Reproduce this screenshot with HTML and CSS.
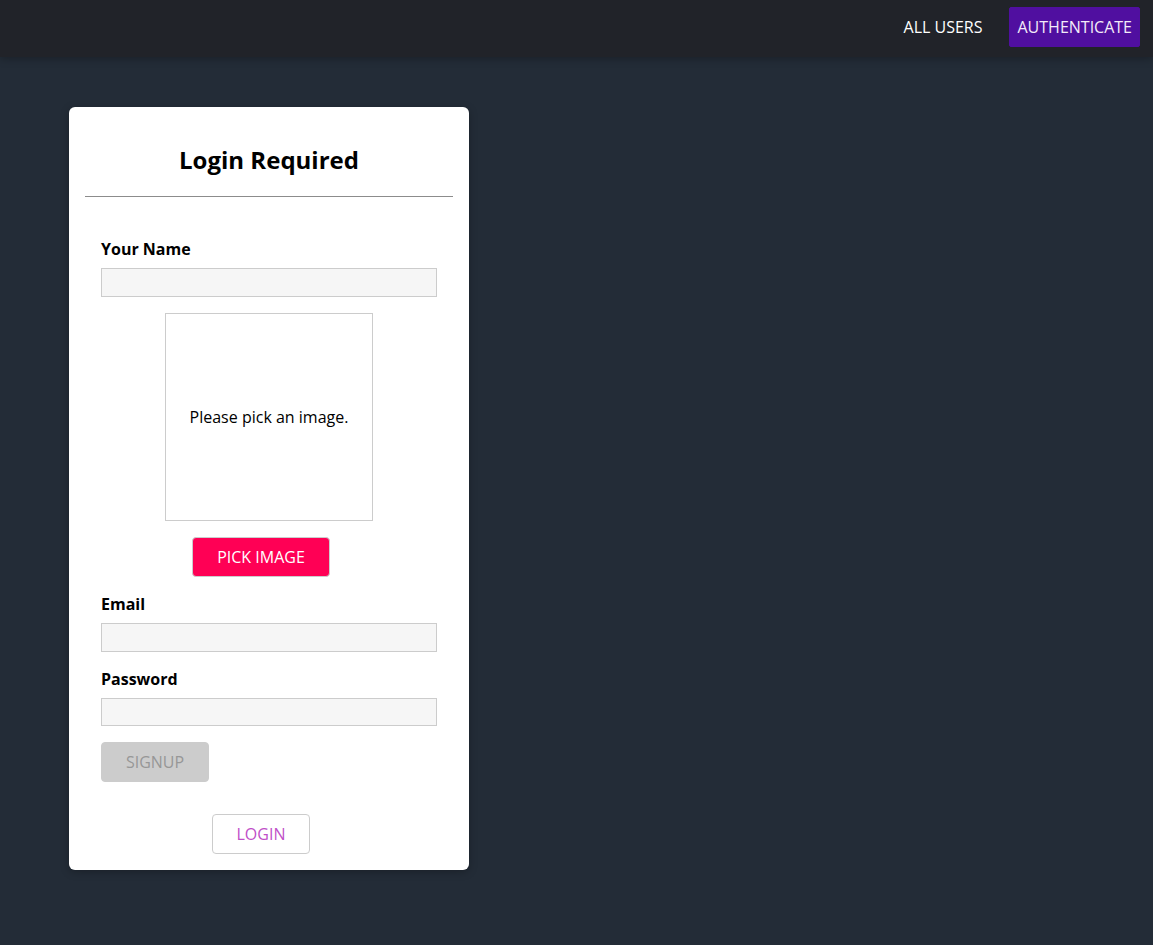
FILE: index.html
```html
<!DOCTYPE html>
<html lang="en">
<head>
<meta charset="utf-8">
<title>Authenticate</title>
<link rel="stylesheet" href="styles.css">
</head>
<body>
<header class="main-header">
  <nav class="nav-links">
    <a class="nav-link" href="#">ALL USERS</a>
    <a class="nav-link nav-link--active" href="#">AUTHENTICATE</a>
  </nav>
</header>
<main class="main">
  <div class="card authentication">
    <h2 class="auth-title">Login Required</h2>
    <hr class="auth-rule">
    <form class="auth-form">
      <div class="form-control">
        <label for="name">Your Name</label>
        <input id="name" type="text">
      </div>
      <div class="image-upload">
        <div class="image-upload__preview"><p>Please pick an image.</p></div>
        <button type="button" class="button">PICK IMAGE</button>
      </div>
      <div class="form-control">
        <label for="email">Email</label>
        <input id="email" type="email">
      </div>
      <div class="form-control">
        <label for="password">Password</label>
        <input id="password" type="password">
      </div>
      <div class="form-actions">
        <button type="submit" class="button" disabled>SIGNUP</button>
      </div>
    </form>
    <div class="switch-row">
      <button type="button" class="button button--inverse">LOGIN</button>
    </div>
  </div>
</main>
</body>
</html>
```
FILE: styles.css
```css
* { box-sizing: border-box; }
html, body { margin: 0; padding: 0; }
body {
  font-family: "Open Sans", "Liberation Sans", sans-serif;
  background: #232c37;
  color: #000;
  min-height: 100vh;
}
.main-header {
  height: 57px;
  background: #212329;
  box-shadow: 0 2px 8px rgba(0, 0, 0, 0.26);
  display: flex;
  justify-content: flex-end;
  align-items: center;
  padding: 0 13px 4px 0;
  position: relative;
  z-index: 1;
}
.nav-links { display: flex; align-items: center; gap: 19px; }
.nav-link {
  color: #fff;
  text-decoration: none;
  font-size: 16px;
  line-height: 22px;
  padding: 8px 7px;
  border: 1px solid transparent;
  border-radius: 2px;
}
.nav-link--active {
  background: #500fa0;
  color: #f3ebf8;
  border-color: #500fa0;
}
.main { padding: 50px 0 40px 69px; }
.card {
  width: 400px;
  background: #fff;
  border-radius: 6px;
  padding: 16px;
  box-shadow: 0 2px 8px rgba(0, 0, 0, 0.26);
}
.authentication { text-align: center; }
.auth-title {
  font-size: 24px;
  line-height: 33px;
  font-weight: 700;
  margin: 20px 0;
}
.auth-rule {
  border: 0;
  border-top: 1px solid #8c8c8c;
  height: 0;
  margin: 0;
}
.auth-form { padding: 25px 16px 0; margin-bottom: 32px; }
.form-control { margin: 16px 0; text-align: left; }
.form-control label {
  display: block;
  font-weight: 700;
  font-size: 16px;
  line-height: 22px;
  margin-bottom: 8px;
}
.form-control input {
  display: block;
  width: 100%;
  font: inherit;
  line-height: 22px;
  border: 1px solid #ccc;
  background: #f6f6f6;
  padding: 2.4px 4px;
  outline: none;
}
.image-upload {
  display: flex;
  flex-direction: column;
  align-items: center;
  margin: 16px 0;
}
.image-upload__preview {
  width: 208px;
  height: 208px;
  border: 1px solid #ccc;
  display: flex;
  justify-content: center;
  align-items: center;
  text-align: center;
  margin-bottom: 16px;
}
.image-upload__preview p { margin: 0; font-size: 16px; line-height: 22px; }
.button {
  font: inherit;
  font-size: 16px;
  line-height: 22px;
  padding: 8px 24px;
  border: 1px solid #ccc;
  border-radius: 4px;
  background: #ff0055;
  color: #fff;
  margin-right: 16px;
  cursor: pointer;
}
.button:disabled {
  background: #ccc;
  color: #979797;
  border-color: #ccc;
  cursor: not-allowed;
}
.button--inverse { background: #fff; color: #c04fc8; }
.form-actions { text-align: left; }
.form-actions .button { width: 108px; padding: 8px 0; }
.switch-row { display: flex; justify-content: center; }
```
